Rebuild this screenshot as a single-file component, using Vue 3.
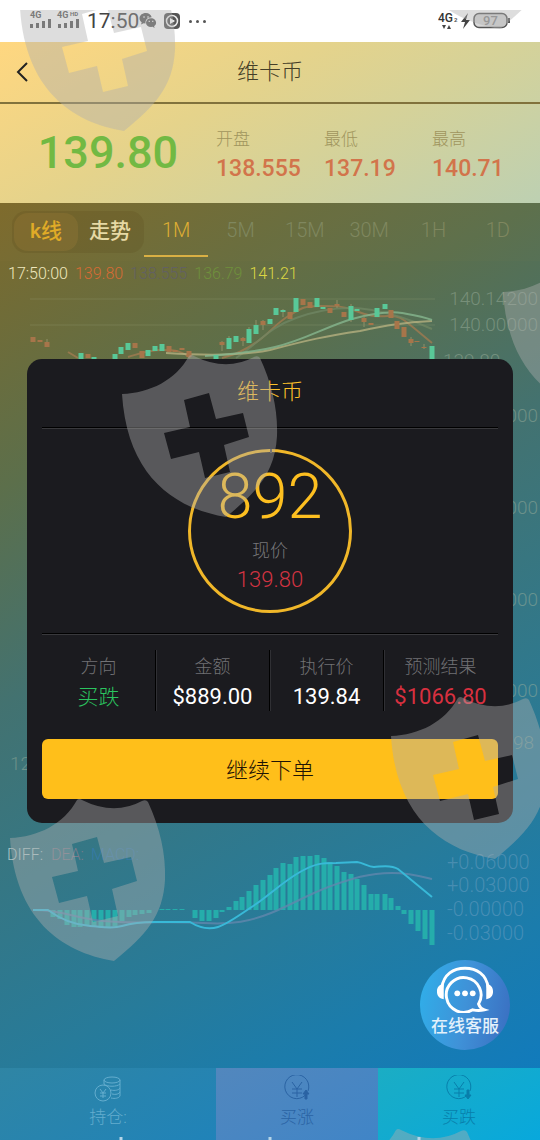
<script setup>
import { ref } from 'vue'

const mode = ref('k')
const period = ref('1M')
const periods = ['1M', '5M', '15M', '30M', '1H', '1D']

const quotes = [
  { label: '开盘', value: '138.555' },
  { label: '最低', value: '137.19' },
  { label: '最高', value: '140.71' },
]

const order = [
  { label: '方向', value: '买跌', tone: 'green' },
  { label: '金额', value: '$889.00', tone: '' },
  { label: '执行价', value: '139.84', tone: '' },
  { label: '预测结果', value: '$1066.80', tone: 'red' },
]

// x, top, bottom, colour (u = up, d = down)
const candles = [
  [33, 337, 342, 'd'], [40, 340, 342, 'd'], [47, 342, 347, 'd'], [81, 353, 360, 'u'],
  [88, 354, 358, 'd'], [94, 357, 360, 'u'], [115, 354, 360, 'u'], [121, 347, 354, 'u'],
  [128, 343, 350, 'u'], [135, 343, 348, 'd'], [142, 351, 358, 'd'], [148, 350, 356, 'u'],
  [155, 346, 351, 'u'], [162, 344, 351, 'u'], [169, 346, 352, 'd'], [175, 350, 352, 'd'],
  [182, 348, 350, 'd'], [189, 351, 357, 'd'], [216, 355, 360, 'u'], [222, 342, 345, 'd'],
  [229, 338, 349, 'u'], [236, 336, 342, 'u'], [243, 338, 341, 'd'], [249, 329, 343, 'u'],
  [256, 325, 334, 'u'], [263, 321, 325, 'd'], [270, 319, 324, 'u'], [276, 308, 315, 'u'],
  [283, 310, 312, 'u'], [290, 312, 319, 'd'], [296, 298, 312, 'u'], [303, 299, 305, 'd'],
  [310, 302, 308, 'd'], [317, 298, 307, 'u'], [323, 307, 309, 'u'], [330, 308, 313, 'd'],
  [337, 304, 306, 'd'], [344, 312, 317, 'd'], [351, 306, 320, 'u'], [357, 309, 311, 'u'],
  [364, 318, 322, 'd'], [371, 323, 325, 'd'], [377, 308, 317, 'u'], [385, 304, 309, 'u'],
  [391, 310, 318, 'd'], [397, 321, 329, 'd'], [404, 327, 337, 'd'], [411, 339, 343, 'd'],
  [417, 341, 342, 'd'], [424, 347, 348, 'd'], [432, 346, 362, 'u'],
]
const wicks = [
  [47, 339, 347], [222, 341, 351], [229, 336, 349], [243, 337, 346], [249, 327, 343],
  [256, 320, 334], [263, 320, 330], [283, 309, 317], [337, 300, 308], [351, 304, 322],
  [364, 316, 327], [411, 337, 346], [424, 344, 349],
]

const priceLabels = [
  ['140.14200', 305], ['140.00000', 331], ['139.50000', 422],
  ['139.00000', 514], ['138.50000', 606], ['138.00000', 697],
]
const macdLabels = [
  ['+0.06000', 869], ['+0.03000', 892], ['-0.00000', 916], ['-0.03000', 940],
]

const zero = 910
const bars = [
  [53, 917], [60, 919], [67, 925], [74, 927], [80, 927], [87, 926], [94, 927], [101, 928],
  [108, 927], [115, 926], [122, 921], [129, 917], [135, 915], [142, 914], [149, 913],
  [162, 909], [168, 909], [175, 909], [182, 909], [195, 918], [202, 921], [209, 921],
  [216, 918], [222, 912], [229, 907], [236, 901], [242, 897], [249, 891], [256, 885],
  [263, 880], [270, 875], [276, 868], [283, 863], [290, 864], [296, 857], [303, 856],
  [310, 856], [317, 855], [324, 858], [330, 862], [337, 866], [344, 872], [351, 874],
  [357, 879], [364, 885], [371, 894], [377, 894], [385, 894], [391, 898], [398, 906],
  [404, 914], [411, 924], [418, 931], [425, 939], [432, 945],
]

// left corner of every shield
const shields = [[20, 8], [396, -94], [503, 292], [122, 394], [391, 736], [10, 838], [329, 1168]]
</script>

<template>
  <div class="page">
    <div class="status">
      <svg class="signal" viewBox="0 0 52 22" aria-hidden="true">
        <text x="0" y="8" class="net">4G</text>
        <text x="27" y="8" class="net">4G</text>
        <text x="40" y="6" class="net-sm">HD</text>
        <path d="M1.500 18v-4M7.500 18v-5M13.500 18v-7M19.500 18v-9M29.500 18v-4M35.500 18v-5M41.500 18v-7M47.500 18v-9" />
      </svg>
      <span class="clock">17:50</span>
      <svg class="wechat" viewBox="0 0 18 18" aria-hidden="true">
        <path fill="#5b5b5b" d="M7 1C3 1 .5 3.500.5 6.300c0 1.700.8 3 2.200 4L2 12.500l2.600-1.300 2 .4C6 7.800 8.500 5.500 12.700 5.300 12 2.700 9.800 1 7 1z" />
        <path fill="#5b5b5b" d="M12 6.300c-3 0-5 2-5 4.400s2 4.400 5 4.400l1.600-.3 2 1.100-.5-1.800c1.300-.8 2-2 2-3.400 0-2.400-2.200-4.400-5.100-4.400z" />
        <path fill="#ddd" d="M4.300 4.200h1.500v1.500H4.300zM8.300 4.200h1.500v1.500H8.300zM9.600 8.700H11v1.400H9.600zM13 8.700h1.400v1.400H13z" />
      </svg>
      <svg class="player" viewBox="0 0 18 18" aria-hidden="true">
        <rect x="1" y="1" width="16" height="16" rx="4" fill="#555" />
        <circle cx="9" cy="9" r="5.500" fill="none" stroke="#eee" stroke-width="1.500" />
        <path d="M7 6l5 3-5 3z" fill="#fff" />
      </svg>
      <span class="dots"><i></i><i></i><i></i></span>
      <svg class="power" viewBox="0 0 74 22" aria-hidden="true">
        <text x="0" y="12" class="net2">4G</text>
        <text x="16" y="12" class="net-sm">2</text>
        <path d="M4 15h4l-2 4zM9 19h4l-2-4z" fill="#444" />
        <path d="M30 3l-7 9h4l-2 7 7-9h-4z" fill="#444" />
        <rect x="36" y="3.500" width="33" height="14" rx="5" fill="#d8d8d8" stroke="#555" stroke-width="1.500" />
        <path d="M71 8v5" stroke="#555" stroke-width="2" />
        <text x="45" y="15" class="pct">97</text>
      </svg>
    </div>

    <header class="top">
      <div class="bar">
        <button class="back" aria-label="返回">
          <svg viewBox="0 0 12 20"><path d="M11 1L2 10l9 9" /></svg>
        </button>
        <h1>维卡币</h1>
      </div>
      <div class="quotes">
        <strong class="last">139.80</strong>
        <div v-for="q in quotes" :key="q.label" class="quote">
          <span>{{ q.label }}</span>
          <b>{{ q.value }}</b>
        </div>
      </div>
    </header>

    <main class="market">
      <div class="tabs">
        <div class="switch">
          <button :class="{ on: mode === 'k' }" @click="mode = 'k'">k线</button>
          <button :class="{ on: mode === 'trend' }" @click="mode = 'trend'">走势</button>
        </div>
        <button
          v-for="p in periods"
          :key="p"
          class="tab"
          :class="{ active: period === p }"
          @click="period = p"
        >{{ p }}</button>
      </div>

      <div class="info">
        <span class="time">17:50:00</span>
        <span class="c1">139.80</span>
        <span class="c2">138.555</span>
        <span class="c3">136.79</span>
        <span class="c4">141.21</span>
      </div>

      <svg class="chart" viewBox="0 286 540 782">
        <path class="grid" d="M30 299H435M30 325H435" />
        <path class="ma d" d="M68 352l10 6M128 357C142 353 148 350 162 350S182 351 190 358M222 358C238 354 252 346 262 338S278 322 290 315 304 306 320 306 344 306 356 311 376 317 388 316 404 320 414 328L432 343" />
        <path class="ma dim" d="M236 358C260 342 268 328 296 318S350 306 372 310 412 320 432 329" />
        <path class="ma pale" d="M166 353C196 355 236 357 270 350 308 340 326 336 360 331 384 326 404 322 432 321" />
        <path class="ma mint" d="M205 356C235 354 255 352 275 347 305 340 325 327 352 319 374 313 390 311 402 313S422 316 432 320" />
        <path v-for="w in wicks" :key="'w' + w[0]" class="wick" :d="`M${w[0]} ${w[1]}V${w[2]}`" />
        <rect
          v-for="c in candles"
          :key="c[0]"
          :class="c[3]"
          :x="c[0] - 2.5"
          :y="c[1]"
          width="5"
          :height="c[2] - c[1]"
        />
        <text v-for="l in priceLabels" :key="l[0]" class="axis" x="538" :y="l[1]" text-anchor="end">{{ l[0] }}</text>
        <text class="axis" x="443" y="367">139.80</text>
        <text class="axis" x="534" y="749" text-anchor="end">138.98</text>
        <text class="axis" x="10" y="770">12:51</text>

        <text class="legend" x="7" y="860">DIFF:</text>
        <text class="legend dea" x="51" y="860">DEA:</text>
        <text class="legend macd" x="91" y="860">MACD:</text>
        <rect
          v-for="b in bars"
          :key="'b' + b[0]"
          class="hist"
          :x="b[0] - 2.5"
          :y="Math.min(b[1], zero)"
          width="5"
          :height="Math.abs(b[1] - zero)"
        />
        <path class="dea-line" d="M33 910C63 910 74 918 103 921S173 921 203 923 251 921 271 913 311 893 331 886 368 873 392 873C410 873 420 876 432 879" />
        <path class="diff-line" d="M33 910H48C60 919 76 925 90 926S112 929 122 926 147 922 155 922H190C198 927 208 930 218 927S244 912 256 904 284 881 300 872 322 863 336 863L357 862C364 863 368 867 374 867S390 864 398 869L432 897" />
        <text v-for="l in macdLabels" :key="l[0]" class="axis blue" x="447" :y="l[1]">{{ l[0] }}</text>
      </svg>
    </main>

    <nav class="actions">
      <button class="hold">
        <svg viewBox="0 0 28 28">
          <circle cx="9" cy="18" r="8" />
          <path d="M6 14l3 4 3-4M9 18v5M6 18h6M6 21h6" />
          <ellipse cx="18" cy="5" rx="8" ry="3" />
          <path d="M10 5v4c3 3 13 3 16 0V5M26 9v4c-1 2-5 3-9 2M26 13v4c-1 2-4 3-8 2M26 17v4c-1 2-5 3-9 2" />
        </svg>
        持仓:
      </button>
      <button class="rise">
        <svg viewBox="0 0 28 28">
          <path d="M24 18a12 12 0 1 1 1-2M9 7l5 7 5-7M14 14v8M9 14h10M9 18h10" />
          <path class="arrow" d="M23 15l3 4h-2v5h-2v-5h-2z" />
        </svg>
        买涨
      </button>
      <button class="fall">
        <svg viewBox="0 0 28 28">
          <path d="M24 18a12 12 0 1 1 1-2M9 7l5 7 5-7M14 14v8M9 14h10M9 18h10" />
          <path class="arrow" d="M23 24l3-4h-2v-5h-2v5h-2z" />
        </svg>
        买跌
      </button>
    </nav>

    <button class="service">
      <svg viewBox="0 0 60 48" aria-hidden="true">
        <path class="line" d="M6 22C8 8 18 2 30 2s22 6 24 20" />
        <path class="cup" d="M8 18v16c-5-1-7-4-7-8s2-7 7-8zM52 18v16c5-1 7-4 7-8s-2-7-7-8z" />
        <path class="line" d="M44 39a18 18 0 1 0-6 6c4 1 8 1 12 0-3-1-5-3-6-6z" />
        <circle cx="22" cy="28" r="3" /><circle cx="30" cy="28" r="3" /><circle cx="38" cy="28" r="3" />
      </svg>
      <span>在线客服</span>
    </button>

    <div class="overlay">
      <section class="dialog" role="dialog" aria-labelledby="dialog-title">
        <h2 id="dialog-title">维卡币</h2>
        <div class="ring">
          <svg viewBox="0 0 164 164" aria-hidden="true">
            <circle cx="82" cy="82" r="80.5" />
            <path d="M83 0v4" />
          </svg>
          <strong>892</strong>
          <span>现价</span>
          <em>139.80</em>
        </div>
        <dl class="order">
          <div v-for="o in order" :key="o.label">
            <dt>{{ o.label }}</dt>
            <dd :class="o.tone">{{ o.value }}</dd>
          </div>
        </dl>
        <button class="again">继续下单</button>
      </section>
    </div>

    <svg class="marks" viewBox="0 10 540 1130" preserveAspectRatio="xMidYMin slice" aria-hidden="true">
      <path
        v-for="s in shields"
        :key="s.join()"
        fill-rule="evenodd"
        :transform="`translate(${s[0]} ${s[1]})`"
        d="M0 0C28-1 54-14 67-38Q69-40 72-38Q104-22 132-37Q136-39 138-36C150-10 156 16 155 42C153 78 136 97 104 123C50 114 5 80 0 0zM62 6L87-1 94 25 121 19 127 43 102 51 108 78 83 84 77 58 49 65 42 39 68 33z"
      />
      <path class="ticks" d="M121 1137v4M270 1137v4M419 1137v4" />
    </svg>
  </div>
</template>

<style>
body {
  margin: 0;
}
</style>

<style scoped>
.page {
  position: relative;
  display: flex;
  flex-direction: column;
  min-height: 100vh;
  overflow: hidden;
  font-family: Roboto, 'Noto Sans CJK SC', sans-serif;
  font-weight: 300;
  background: linear-gradient(151deg, #8a6a1b 4%, #7d6a2b 14%, #5c6f4b 34%, #437270 49%, #387680 59%, #277b9a 75%, #1b7cac 85%, #0c7ac4 100%);
}

button {
  padding: 0;
  border: 0;
  background: none;
  font: inherit;
  color: inherit;
  cursor: pointer;
}

.status {
  display: flex;
  align-items: center;
  height: 42px;
  box-sizing: border-box;
  padding: 0 28px 0 30px;
  background: #fff;
  color: #444;
}

.signal {
  width: 52px;
  height: 22px;
  overflow: visible;
}

.signal path {
  stroke: #555;
  stroke-width: 3;
}

.net {
  font: 700 9px Roboto, sans-serif;
  fill: #555;
}

.net2 {
  font: 500 12px Roboto, sans-serif;
  fill: #333;
}

.net-sm {
  font: 700 6px Roboto, sans-serif;
  fill: #555;
}

.clock {
  margin-left: 5px;
  width: 52px;
  font-size: 21px;
  font-weight: 400;
}

.wechat,
.player {
  width: 18px;
  height: 18px;
}

.player {
  margin-left: 6px;
}

.dots {
  display: flex;
  gap: 4px;
  margin-left: 8px;
}

.dots i {
  width: 3px;
  height: 3px;
  background: #555;
  border-radius: 50%;
}

.power {
  width: 74px;
  height: 22px;
  margin-left: auto;
}

.pct {
  font: 500 13px Roboto, sans-serif;
  fill: #888;
}

.top {
  background: linear-gradient(151deg, #ffd780, #e5d38b 39%, #d6d298 62%, #bdd0b2);
}

.bar {
  display: flex;
  align-items: center;
  height: 60px;
  padding: 0 16px;
}

.back {
  width: 12px;
  height: 20px;
}

.back svg {
  display: block;
  fill: none;
  stroke: #222;
  stroke-width: 2;
}

h1 {
  flex: 1;
  margin: 0 12px 0 0;
  text-align: center;
  font-size: 22px;
  font-weight: 300;
  line-height: 32px;
  color: #443e28;
}

.quotes {
  display: grid;
  grid-template-columns: 4fr 2fr 2fr 2fr;
  height: 99px;
  align-items: center;
  border-top: 2px solid #81723c;
}

.last {
  padding-bottom: 3px;
  text-align: center;
  font-size: 45px;
  font-weight: 500;
  color: #72b943;
}

.quote {
  display: flex;
  flex-direction: column;
  gap: 6px;
  line-height: 24px;
}

.quote span {
  font-size: 17px;
  color: #a0955d;
}

.quote b {
  font-size: 23px;
  font-weight: 500;
  color: #d2744b;
}

.market {
  flex: 1;
}

.tabs {
  display: flex;
  align-items: center;
  height: 58px;
  padding: 0 10px 0 12px;
  background: rgba(180, 150, 80, 0.04);
}

.switch {
  display: flex;
  width: 132px;
  height: 42px;
  box-sizing: border-box;
  padding: 2px;
  border-radius: 14px;
  background: rgba(80, 60, 20, 0.16);
  font-size: 21px;
  font-weight: 500;
  color: #e6d9a4;
}

.switch button {
  flex: 1;
  padding-bottom: 7px;
  border-radius: 14px;
}

.switch .on {
  background: rgba(190, 150, 70, 0.16);
  color: #e0ab27;
}

.tab {
  flex: 1;
  height: 50px;
  box-sizing: border-box;
  padding-bottom: 2px;
  border-bottom: 2px solid transparent;
  font-size: 20px;
  color: #7f875f;
}

.tab.active {
  color: #dfae33;
  border-color: #d9b044;
}

.info {
  display: flex;
  align-items: center;
  gap: 7px;
  height: 25px;
  padding: 0 8px;
  font-size: 16px;
}

.time {
  color: #efe8be;
}

.c1 {
  color: #d66b35;
}

.c2 {
  color: #626063;
}

.c3 {
  color: #6f903c;
}

.c4 {
  color: #dcd743;
}

.chart {
  display: block;
  width: 100%;
}

.grid {
  stroke: rgba(160, 170, 130, 0.25);
}

.u {
  fill: #59c898;
}

.d {
  fill: #a7754a;
}

.wick {
  stroke: #8f9069;
}

.ma {
  fill: none;
  stroke-width: 2;
  opacity: 0.8;
}

.ma.d {
  stroke: #a17b50;
}

.ma.dim {
  stroke: #6f8663;
}

.ma.pale {
  stroke: #b5b07f;
}

.ma.mint {
  stroke: #86b78e;
}

.axis {
  font-size: 19px;
  fill: rgba(155, 175, 155, 0.5);
}

.axis.blue {
  font-size: 20px;
  fill: rgba(120, 165, 200, 0.45);
}

.legend {
  font-size: 16px;
  fill: #a9c4c6;
}

.legend.dea {
  fill: #7b7d8c;
}

.legend.macd {
  fill: #367ba6;
}

.hist {
  fill: #25adab;
}

.dea-line,
.diff-line {
  fill: none;
  stroke: #6187ac;
  stroke-width: 2;
  opacity: 0.8;
}

.diff-line {
  stroke: #38b9d8;
  opacity: 1;
}

.actions {
  display: grid;
  grid-template-columns: 4fr 3fr 3fr;
  height: 72px;
}

.actions button {
  display: flex;
  flex-direction: column;
  align-items: center;
  gap: 2px;
  padding-top: 7px;
  font-size: 17px;
  line-height: 24px;
}

.actions svg {
  width: 28px;
  height: 28px;
  fill: none;
  stroke: currentColor;
}

.actions .arrow {
  fill: currentColor;
}

.hold {
  background: linear-gradient(151deg, #2f85a4, #2083b9);
  color: #64adce;
}

.rise {
  background: linear-gradient(151deg, #5287bd, #4085c7);
  color: #2a63a3;
}

.fall {
  background: linear-gradient(151deg, #1badc4, #08a8dc);
  color: #087fab;
}

.service {
  position: absolute;
  right: 30px;
  bottom: 90px;
  display: flex;
  flex-direction: column;
  align-items: center;
  width: 90px;
  height: 90px;
  padding-top: 6px;
  border-radius: 50%;
  background: linear-gradient(100deg, #2fb0ea, #3f92d8 50%, #3a6dc0);
  font-size: 17px;
  font-weight: 500;
  line-height: 26px;
  color: #e3f1fb;
}

.service svg {
  width: 58px;
  height: 47px;
  fill: #fff;
}

.service .line {
  fill: none;
  stroke: #fff;
  stroke-width: 3;
}

.overlay {
  position: absolute;
  inset: 42px 0 0;
  display: flex;
  align-items: center;
  padding: 0 5%;
}

.dialog {
  flex: 1;
  padding: 0 15px 24px;
  border-radius: 15px;
  background: #1b1b1f;
}

h2 {
  margin: 0;
  padding-bottom: 3px;
  text-align: center;
  font-size: 22px;
  font-weight: 300;
  line-height: 65px;
  color: #fdc02a;
  border-bottom: 1px solid #000;
  box-shadow: 0 1px #39393c;
}

.ring {
  position: relative;
  display: flex;
  flex-direction: column;
  align-items: center;
  width: 164px;
  height: 164px;
  margin: 21px auto 20px;
}

.ring svg {
  position: absolute;
  inset: 0;
  fill: none;
  stroke: #f0b729;
  stroke-width: 3;
}

.ring path {
  stroke: #55504a;
  stroke-width: 2;
}

.ring strong {
  margin-top: 16px;
  font-size: 63px;
  font-weight: 300;
  line-height: 64px;
  color: #fdbf20;
}

.ring span {
  margin-top: 9px;
  font-size: 18px;
  line-height: 26px;
  color: #77777a;
}

.ring em {
  font-size: 22px;
  font-style: normal;
  line-height: 32px;
  color: #d23342;
}

.order {
  display: grid;
  grid-template-columns: repeat(4, 1fr);
  margin: 0;
  padding: 16px 0 28px;
  border-top: 1px solid #000;
  box-shadow: inset 0 1px #39393c;
}

.order div {
  height: 61px;
  text-align: center;
  border-right: 1px solid transparent;
}

.order div:not(:last-child) {
  border-color: #000;
  box-shadow: 1px 0 #303034;
}

dt {
  font-size: 18px;
  line-height: 34px;
  color: #717174;
}

dd {
  margin: 0;
  font-size: 22px;
  font-weight: 400;
  line-height: 26px;
  white-space: nowrap;
  color: #fff;
}

dd.green {
  font-size: 21px;
  font-weight: 300;
  color: #2bc45f;
}

dd.red {
  color: #d8303f;
}

.again {
  display: block;
  width: 100%;
  height: 60px;
  padding-bottom: 2px;
  border-radius: 6px;
  background: #ffbf1a;
  font-size: 22px;
  color: #1f1405;
}

.marks {
  position: absolute;
  inset: 10px 0 0;
  width: 100%;
  height: calc(100% - 10px);
  fill: rgba(175, 175, 175, 0.42);
  pointer-events: none;
}

.ticks {
  stroke: #b5d5e8;
  stroke-width: 3;
}
</style>
